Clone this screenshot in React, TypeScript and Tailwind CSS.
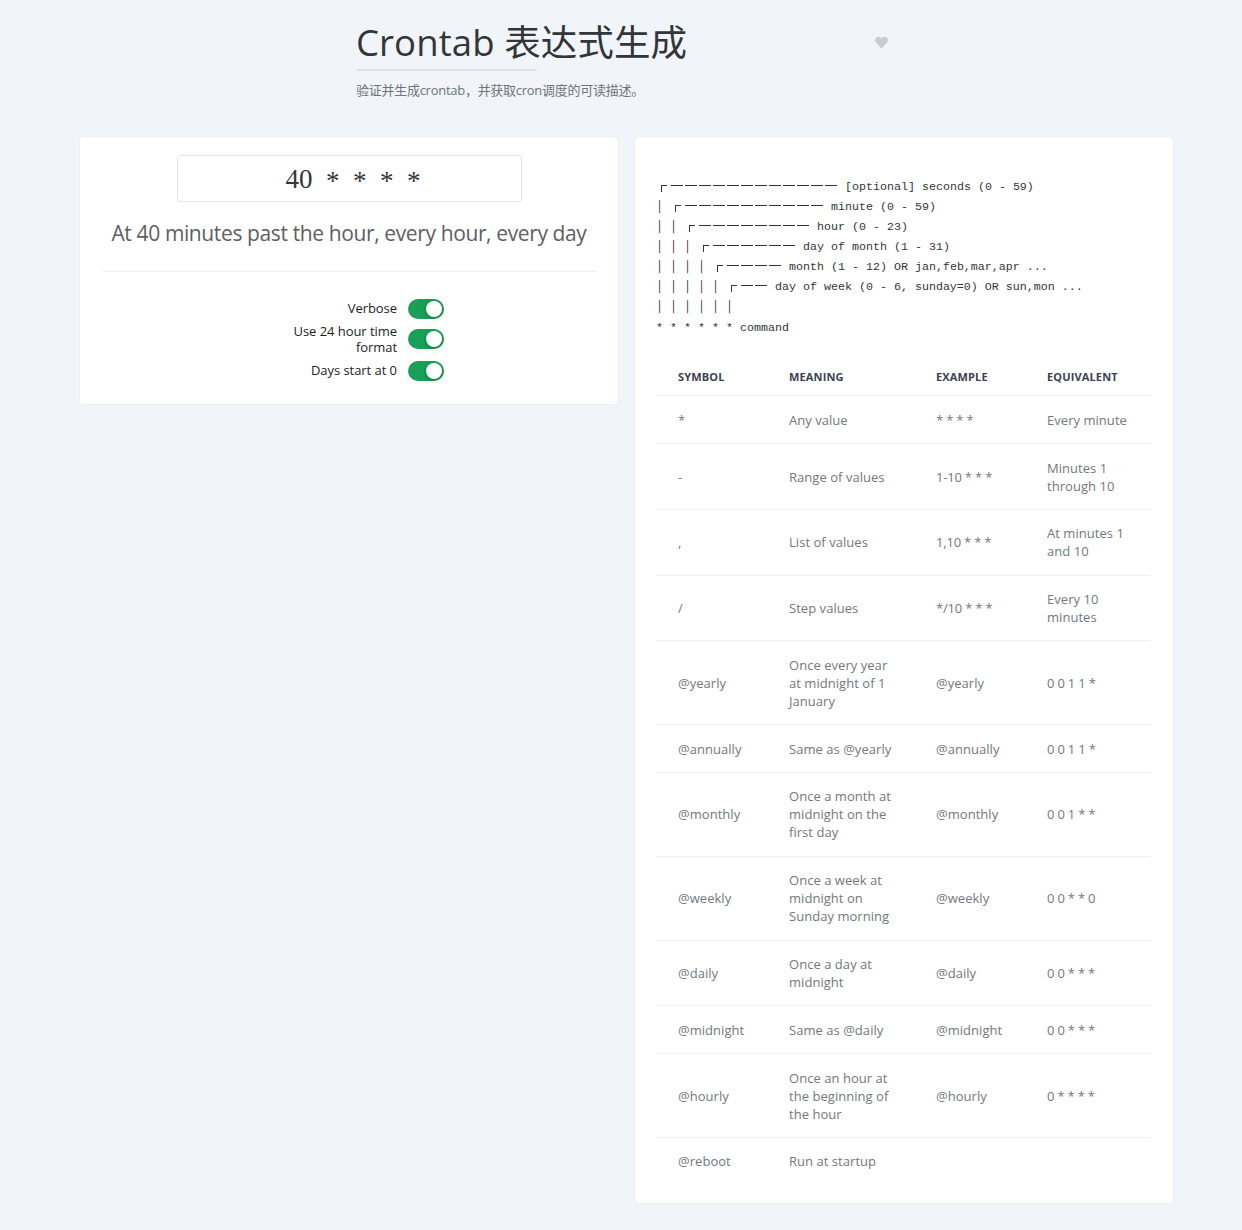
import React from "react";

const rows: { h: string; cells: string[][] }[] = [
  { h: "h-[48px] *:pt-[2px]", cells: [["*"], ["Any value"], ["* * * *"], ["Every minute"]] },
  { h: "h-[66px] *:pt-[2px]", cells: [["-"], ["Range of values"], ["1-10 * * *"], ["Minutes 1", "through 10"]] },
  { h: "h-[66px]", cells: [[","], ["List of values"], ["1,10 * * *"], ["At minutes 1", "and 10"]] },
  { h: "h-[65px]", cells: [["/"], ["Step values"], ["*/10 * * *"], ["Every 10", "minutes"]] },
  { h: "h-[84px] *:pt-[2px]", cells: [["@yearly"], ["Once every year", "at midnight of 1", "January"], ["@yearly"], ["0 0 1 1 *"]] },
  { h: "h-[48px] *:pt-[2px]", cells: [["@annually"], ["Same as @yearly"], ["@annually"], ["0 0 1 1 *"]] },
  { h: "h-[84px]", cells: [["@monthly"], ["Once a month at", "midnight on the", "first day"], ["@monthly"], ["0 0 1 * *"]] },
  { h: "h-[84px]", cells: [["@weekly"], ["Once a week at", "midnight on", "Sunday morning"], ["@weekly"], ["0 0 * * 0"]] },
  { h: "h-[65px]", cells: [["@daily"], ["Once a day at", "midnight"], ["@daily"], ["0 0 * * *"]] },
  { h: "h-[48px] *:pt-[2px]", cells: [["@midnight"], ["Same as @daily"], ["@midnight"], ["0 0 * * *"]] },
  { h: "h-[84px] *:pt-[2px]", cells: [["@hourly"], ["Once an hour at", "the beginning of", "the hour"], ["@hourly"], ["0 * * * *"]] },
  { h: "h-[48px]", cells: [["@reboot"], ["Run at startup"], [""], [""]] },
];

const diagram = [
  { bars: 0, dashes: 12, label: "[optional] seconds (0 - 59)" },
  { bars: 1, dashes: 10, label: "minute (0 - 59)" },
  { bars: 2, dashes: 8, label: "hour (0 - 23)" },
  { bars: 3, dashes: 6, label: "day of month (1 - 31)" },
  { bars: 4, dashes: 4, label: "month (1 - 12) OR jan,feb,mar,apr ..." },
  { bars: 5, dashes: 2, label: "day of week (0 - 6, sunday=0) OR sun,mon ..." },
  { bars: 6, dashes: 0, label: "" },
];

function Switch() {
  return (
    <span className="flex h-5 w-9 shrink-0 items-center justify-end rounded-full bg-[#18a058] pr-[2px]">
      <span className="size-4 rounded-full bg-white shadow-[0_1px_4px_rgba(0,0,0,0.3)]" />
    </span>
  );
}

function Option({ lines, className }: { lines: string[]; className: string }) {
  return (
    <div className={"flex items-center gap-[10.5px] " + className}>
      <span className={"w-[140px] text-right text-[13px] leading-4 tracking-[-0.05px] text-[#1f2225]" + (lines.length === 1 ? " pb-[2px]" : "")}>
        {lines.map((l) => (
          <span key={l} className="block whitespace-nowrap">{l}</span>
        ))}
      </span>
      <Switch />
    </div>
  );
}

function Diagram() {
  return (
    <div className="font-['Liberation_Mono','Noto_Sans_CJK_SC',monospace] text-[11.67px] leading-5 text-[#333639]">
      {diagram.map((d) => (
        <div key={d.bars} className="flex h-5 items-start whitespace-pre">
          {Array.from({ length: d.bars }, (_, i) => (
            <span key={i} className="w-[14px] shrink-0">│</span>
          ))}
          {d.dashes > 0 && (
            <span className="ml-[5px] mr-[4px] mt-2 h-[7px] w-[6px] shrink-0 border-l border-t border-[#333639]" />
          )}
          {Array.from({ length: d.dashes }, (_, i) => (
            <span key={i} className="mr-[2px] mt-2 h-px w-[12px] shrink-0 bg-[#333639]" />
          ))}
          {d.label && <span className="ml-[6px]">{d.label}</span>}
        </div>
      ))}
      <div className="mt-px h-5 whitespace-pre">* * * * * * command</div>
    </div>
  );
}

export default function App() {
  return (
    <div className="h-[1230px] w-[1242px] overflow-hidden bg-[#f1f5f9] pt-[18px] font-['Open_Sans','Noto_Sans_CJK_SC',sans-serif]">
      <header className="ml-[357px] h-[119px] w-[532px]">
        <div className="flex h-[51px] items-center justify-between pb-[2px]">
          <h1 className="ml-[-1px] whitespace-nowrap text-[36.5px] leading-[49px] tracking-[0.1px] text-[#333639]">Crontab 表达式生成</h1>
          <svg viewBox="0 0 512 512" className="mr-px size-[13px]" fill="#c8cdd0">
            <path d="M462.3 62.6C407.5 15.9 326 24.3 275.7 76.2L256 96.5l-19.7-20.3C186.1 24.3 104.5 15.9 49.7 62.6c-62.8 53.6-66.1 149.8-9.9 207.9l193.5 199.8c12.5 12.9 32.8 12.9 45.3 0l193.5-199.8c56.3-58.1 53-154.3-9.8-207.9z" />
          </svg>
        </div>
        <div className="h-[2px] w-[180px] bg-[#dee2e5]" />
        <p className="ml-[-1px] mt-[9px] whitespace-nowrap text-[13px] leading-5 tracking-[-0.27px] text-[#6f7478]">验证并生成crontab，并获取cron调度的可读描述。</p>
      </header>

      <main className="ml-20 flex items-start gap-[17px]">
        <section className="flex h-[267px] w-[538px] flex-col items-center rounded-[3px] bg-white pt-[18px] outline outline-[#efeff5]">
          <div className="flex h-[47px] w-[345px] items-center justify-center whitespace-pre rounded-[3px] border border-[#e4e5e9] pl-[8px] font-['Liberation_Serif',serif] text-[27px] leading-none text-[#333639] [word-spacing:6.75px]">
            <span className="mt-[2px]">40 </span>
            <span className="mt-[5px]">* * * *</span>
          </div>
          <p className="mt-[15px] whitespace-nowrap text-[21px] leading-8 tracking-[-0.38px] text-[#5d6063]">
            At 40 minutes past the hour, every hour, every day
          </p>
          <hr className="mt-[22px] w-[495px] border-[#efeff5]" />
          <div className="mr-[13px] mt-[27px] flex w-[202px] flex-col items-end">
            <Option lines={["Verbose"]} className="h-5" />
            <Option lines={["Use 24 hour time", "format"]} className="mt-[2px] h-9" />
            <Option lines={["Days start at 0"]} className="mt-1 h-5" />
          </div>
        </section>

        <section className="h-[1066px] w-[538px] rounded-[3px] bg-white pl-[21px] pt-10 outline outline-[#efeff5]">
          <Diagram />
          <table className="mt-[21px] w-[495px] table-fixed border-collapse text-left">
            <colgroup>
              <col className="w-[111px]" />
              <col className="w-[147px]" />
              <col className="w-[111px]" />
              <col className="w-[126px]" />
            </colgroup>
            <thead>
              <tr className="h-[36px] border-b border-[#efeff2] text-[11px] font-bold text-[#3b4151]">
                {["SYMBOL", "MEANING", "EXAMPLE", "EQUIVALENT"].map((t) => (
                  <th key={t} className="p-0 pl-[22px] align-middle leading-4 tracking-[0.15px]">{t}</th>
                ))}
              </tr>
            </thead>
            <tbody>
              {rows.map((r, i) => (
                <tr key={i} className={r.h + " border-b border-[#efeff2] text-[13px] leading-[18px] tracking-[0.04px] text-[#72787d] last:border-b-0"}>
                  {r.cells.map((c, j) => (
                    <td key={j} className={"whitespace-nowrap pl-[22px] align-middle" + (c[0].includes(" *") ? " tracking-[-0.2px]" : "")}>
                      {c.map((l, k) => (
                        <span key={k} className="block">{l}</span>
                      ))}
                    </td>
                  ))}
                </tr>
              ))}
            </tbody>
          </table>
        </section>
      </main>
    </div>
  );
}
